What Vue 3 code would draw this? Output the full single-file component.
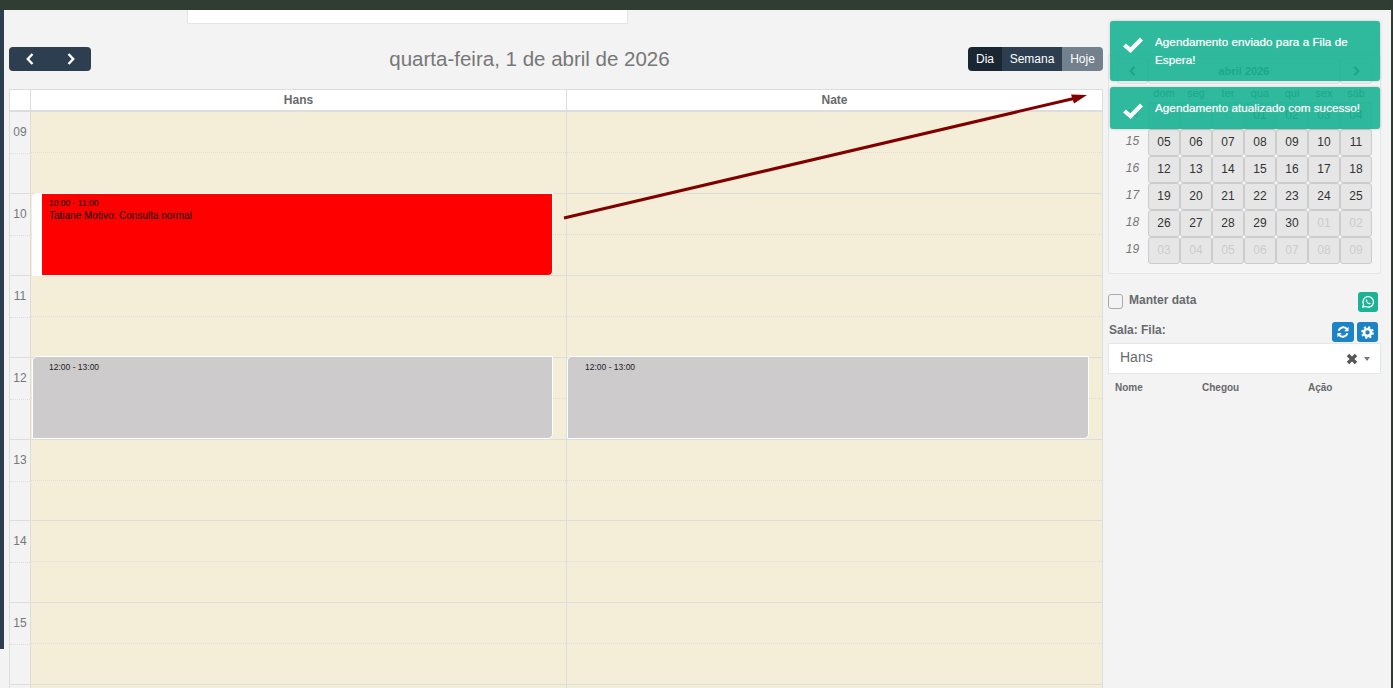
<template>
  <div class="pagina">
    <div class="topo"></div>

    <div class="corpo">
      <div class="faixa"></div>

      <main class="principal">
        <div class="caixa-topo"></div>

        <div class="barra">
          <div class="grupo-nav">
            <button class="btn-nav">
              <svg width="10" height="14" viewBox="0 0 10 14"><path d="M7.500 2 2.800 7l4.700 5" fill="none" stroke="#fff" stroke-width="2.400" /></svg>
            </button>
            <button class="btn-nav">
              <svg width="10" height="14" viewBox="0 0 10 14"><path d="M2.500 2 7.200 7l-4.700 5" fill="none" stroke="#fff" stroke-width="2.400" /></svg>
            </button>
          </div>
          <h2 class="titulo">quarta-feira, 1 de abril de 2026</h2>
          <div class="grupo-vista">
            <button class="btn-vista dia">Dia</button>
            <button class="btn-vista semana">Semana</button>
            <button class="btn-vista hoje">Hoje</button>
          </div>
        </div>

        <div class="agenda">
          <div class="agenda-cab">
            <div class="cab-hora"></div>
            <div v-for="p in profissionais" :key="p.nome" class="cab-nome">{{ p.nome }}</div>
          </div>
          <div class="agenda-corpo">
            <div class="coluna-horas">
              <div v-for="h in horas" :key="h" class="hora">
                <div class="meia rotulo">{{ h }}</div>
                <div class="meia"></div>
              </div>
            </div>
            <div v-for="p in profissionais" :key="p.nome" class="coluna">
              <div v-for="h in horas" :key="h" class="hora">
                <div class="meia"></div>
                <div class="meia"></div>
              </div>
              <div
                v-for="e in p.eventos"
                :key="e.hora"
                class="evento"
                :class="e.tipo"
                :style="{ top: e.topo + 'px', height: e.altura + 'px' }"
              >
                <div class="evento-hora">{{ e.hora }}</div>
                <div v-if="e.texto" class="evento-texto">{{ e.texto }}</div>
              </div>
            </div>
          </div>
        </div>
      </main>

      <aside class="lateral">
        <div class="calendario">
          <div class="cal-cab">
            <span class="cal-seta">
              <svg width="9" height="12" viewBox="0 0 10 14"><path d="M7.500 2 2.800 7l4.700 5" fill="none" stroke="#333" stroke-width="2.600" /></svg>
            </span>
            <span class="cal-mes">abril 2026</span>
            <span class="cal-seta">
              <svg width="9" height="12" viewBox="0 0 10 14"><path d="M2.500 2 7.200 7l-4.700 5" fill="none" stroke="#333" stroke-width="2.600" /></svg>
            </span>
          </div>
          <div class="cal-grade">
            <div></div>
            <div v-for="d in diasSemana" :key="d" class="cal-dow">{{ d }}</div>
            <template v-for="s in semanas" :key="s.num">
              <div class="cal-num">{{ s.num }}</div>
              <div
                v-for="d in s.dias"
                :key="d.t"
                class="cal-dia"
                :class="{ fora: d.fora, atual: d.atual }"
              >{{ d.t }}</div>
            </template>
          </div>
        </div>

        <div class="linha-manter">
          <label class="manter"><span class="check"></span><span class="manter-texto">Manter data</span></label>
          <button class="btn-icone verde">
            <svg width="14" height="14" viewBox="0 0 24 24">
              <path d="M3 21l1.400-5A9 9 0 1 1 8 19.700z" fill="none" stroke="#fff" stroke-width="2.200" stroke-linejoin="round" />
              <path d="M9 7.500c-1.300 1-1.200 2.600 0 4.500 1.300 2 3 3.400 5 3.800 1.300.2 2.300-.5 2.500-1.800l-2.200-1.200-1 1c-1.200-.5-2.300-1.600-3-3l.9-1-1-2.300z" fill="#fff" />
            </svg>
          </button>
        </div>

        <div class="linha-sala">
          <span class="sala">Sala: Fila:</span>
          <div class="botoes-sala">
            <button class="btn-icone azul">
              <svg width="14" height="14" viewBox="0 0 24 24">
                <path d="M4.500 10a8 8 0 0 1 13.600-3.500L20 8.500" fill="none" stroke="#fff" stroke-width="3.400" />
                <path d="M21.500 3v7.500H14z" fill="#fff" />
                <path d="M19.500 14a8 8 0 0 1-13.600 3.500L4 15.500" fill="none" stroke="#fff" stroke-width="3.400" />
                <path d="M2.500 21v-7.500H10z" fill="#fff" />
              </svg>
            </button>
            <button class="btn-icone azul">
              <svg width="13" height="13" viewBox="0 0 24 24">
                <circle cx="12" cy="12" r="6.500" fill="none" stroke="#fff" stroke-width="5" />
                <circle cx="12" cy="12" r="10" fill="none" stroke="#fff" stroke-width="3.500" stroke-dasharray="3.900 3.950" />
              </svg>
            </button>
          </div>
        </div>

        <div class="seletor">
          <span class="seletor-valor">Hans</span>
          <svg class="seletor-x" width="12" height="12" viewBox="0 0 12 12"><path d="M2 2l8 8M10 2l-8 8" stroke="#555" stroke-width="3.400" /></svg>
          <span class="seletor-caret"></span>
        </div>

        <div class="fila-cab">
          <span>Nome</span>
          <span>Chegou</span>
          <span>Ação</span>
        </div>
      </aside>
    </div>

    <svg class="seta" width="1393" height="688" viewBox="0 0 1393 688">
      <line x1="564" y1="218" x2="1076" y2="98" stroke="#800000" stroke-width="3" />
      <polygon points="1087,95 1071,94.500 1074,103.500" fill="#800000" />
    </svg>

    <div class="avisos">
      <div v-for="a in avisos" :key="a" class="aviso">
        <svg class="aviso-check" width="20" height="16" viewBox="0 0 20 16"><path d="M1.500 8 7.500 13.200 18.500 2" fill="none" stroke="#fff" stroke-width="4.200" /></svg>
        {{ a }}
      </div>
    </div>
  </div>
</template>

<script setup>
// a ultima hora fica sem rotulo: o texto dela cairia fora da tela
const horas = ['09', '10', '11', '12', '13', '14', '15', '']

const alturaHora = 81.9
const topoDe = (h) => Math.round((h - 9) * alturaHora)

const profissionais = [
  {
    nome: 'Hans',
    eventos: [
      { hora: '10:00 - 11:00', texto: 'Tatiane Motivo: Consulta normal', tipo: 'vermelho', topo: topoDe(10) - 1, altura: 83 },
      { hora: '12:00 - 13:00', tipo: 'cinza', topo: topoDe(12) - 2, altura: 83 }
    ]
  },
  {
    nome: 'Nate',
    eventos: [{ hora: '12:00 - 13:00', tipo: 'cinza', topo: topoDe(12) - 2, altura: 83 }]
  }
]

const diasSemana = ['dom', 'seg', 'ter', 'qua', 'qui', 'sex', 'sáb']

function dia(t, fora = false, atual = false) {
  return { t, fora, atual }
}

function faixa(inicio, fim) {
  const lista = []
  for (let i = inicio; i <= fim; i++) lista.push(dia(String(i).padStart(2, '0')))
  return lista
}

function foraDoMes(inicio, fim) {
  return faixa(inicio, fim).map((d) => ({ ...d, fora: true }))
}

const semanas = [
  { num: 14, dias: [...foraDoMes(29, 31), dia('01', false, true), ...faixa(2, 4)] },
  { num: 15, dias: faixa(5, 11) },
  { num: 16, dias: faixa(12, 18) },
  { num: 17, dias: faixa(19, 25) },
  { num: 18, dias: [...faixa(26, 30), ...foraDoMes(1, 2)] },
  { num: 19, dias: foraDoMes(3, 9) }
]

const avisos = ['Agendamento enviado para a Fila de Espera!', 'Agendamento atualizado com sucesso!']
</script>

<style>
html,
body {
  margin: 0;
  background: #f3f3f3;
  overflow: hidden;
}
</style>

<style scoped>
.pagina {
  position: relative;
  width: 1393px;
  height: 688px;
  box-sizing: border-box;
  overflow: hidden;
  background: #f3f3f3;
  border-right: 2px solid #2f3a33;
  font-family: "Liberation Sans", Arial, sans-serif;
  color: #676a6c;
}

.topo {
  height: 10px;
  background: #2f3e30;
}

.corpo {
  display: flex;
  align-items: flex-start;
}

.faixa {
  width: 4px;
  height: 639px;
  background: #2c3e50;
  flex: none;
}

.principal {
  width: 1094px;
  margin-left: 5px;
  flex: none;
}

.caixa-topo {
  width: 441px;
  height: 14px;
  margin-left: 178px;
  box-sizing: border-box;
  background: #fff;
  border: 1px solid #e5e5e5;
  border-top: none;
}

.barra {
  display: flex;
  justify-content: space-between;
  align-items: center;
  height: 24px;
  margin-top: 23px;
}

.grupo-nav,
.grupo-vista {
  display: flex;
  border-radius: 4px;
  overflow: hidden;
}

button {
  border: none;
  padding: 0;
  font-family: inherit;
  cursor: pointer;
}

.btn-nav {
  display: flex;
  align-items: center;
  justify-content: center;
  width: 41px;
  height: 24px;
  background: #2c3e50;
}

.titulo {
  margin: 0;
  font-size: 20.5px;
  font-weight: 400;
  color: #777;
}

.btn-vista {
  height: 24px;
  font-size: 12px;
  color: #fff;
}

.dia {
  width: 34px;
  background: #1a2632;
}

.semana {
  width: 60px;
  background: #2c3e50;
}

.hoje {
  width: 41px;
  background: #73808d;
}

.agenda {
  margin-top: 18px;
  border: 1px solid #ddd;
  border-bottom: none;
  box-sizing: border-box;
}

.agenda-cab {
  display: grid;
  grid-template-columns: 21px 536px 1fr;
  height: 22px;
  background: #fff;
  border-bottom: 2px solid #ddd;
  box-sizing: border-box;
}

.cab-hora,
.cab-nome {
  border-right: 1px solid #ddd;
}

.cab-nome {
  font-size: 12px;
  font-weight: 700;
  line-height: 20px;
  text-align: center;
  color: #676a6c;
}

.cab-nome:last-child {
  border-right: none;
}

.agenda-corpo {
  display: grid;
  grid-template-columns: 21px 536px 1fr;
}

.coluna-horas {
  border-right: 1px solid #ddd;
}

.coluna {
  position: relative;
  background: #f4eed8;
  border-right: 1px solid #ddd;
}

.coluna:last-child {
  border-right: none;
}

.hora {
  display: flex;
  flex-direction: column;
  height: 81.9px;
  box-sizing: border-box;
  border-bottom: 1px solid #ddd;
}

.meia {
  flex: 1;
}

.meia:first-child {
  border-bottom: 1px dotted #ddd;
}

.rotulo {
  font-size: 12px;
  line-height: 41px;
  text-align: center;
  color: #777;
}

.evento {
  position: absolute;
  left: 1px;
  width: 521px;
  box-sizing: border-box;
  border: 1px solid #fff;
  border-radius: 5px 0 5px 0;
  padding-left: 16px;
  color: #000;
}

.coluna:last-child .evento {
  left: 0;
  width: 522px;
  padding-left: 17px;
}

.vermelho {
  background: #f00;
  border-left: 10px solid #fff;
  padding-left: 7px;
}

.cinza {
  background: #cdcbcc;
  color: #222;
}

.evento-hora {
  margin-top: 4px;
  font-size: 8.5px;
  line-height: 12px;
}

.vermelho .evento-hora {
  margin-top: 3px;
}

.evento-texto {
  font-size: 10px;
  line-height: 14px;
}

.lateral {
  width: 273px;
  margin-left: 5px;
  flex: none;
}

.calendario {
  height: 220px;
  margin-top: 44px;
  padding: 3px 8px 0;
  box-sizing: border-box;
  background: #f5f5f5;
  border: 1px solid #e5e5e5;
  border-radius: 3px;
}

.cal-cab {
  display: grid;
  grid-template-columns: 31px 1fr 32px;
  height: 26px;
}

.cal-seta,
.cal-mes {
  display: flex;
  align-items: center;
  justify-content: center;
  border: 1px solid #ddd;
  border-radius: 3px;
}

.cal-mes {
  font-size: 11px;
  font-weight: 700;
  color: #333;
}

.cal-grade {
  display: grid;
  grid-template-columns: 31px repeat(7, 32px);
  grid-auto-rows: 27px;
  grid-template-rows: 18px;
}

.cal-dow {
  font-size: 11px;
  line-height: 18px;
  text-align: center;
  color: #333;
}

.cal-num {
  font-size: 12px;
  font-style: italic;
  line-height: 24px;
  text-align: center;
  color: #777;
}

.cal-dia {
  font-size: 12px;
  line-height: 25px;
  text-align: center;
  color: #333;
  background: #e6e6e6;
  border: 1px solid #ccc;
  border-radius: 3px;
  box-sizing: border-box;
}

.fora {
  color: #ccc;
}

.atual {
  background: #d4d4d4;
}

.linha-manter {
  display: flex;
  justify-content: space-between;
  align-items: center;
  height: 20px;
  margin-top: 18px;
  padding-right: 3px;
}

.manter {
  display: flex;
  align-items: center;
  font-size: 12px;
  font-weight: 700;
  color: #676a6c;
}

.manter-texto {
  padding-bottom: 4px;
}

.check {
  width: 15px;
  height: 15px;
  margin: 0 6px 1px 0;
  box-sizing: border-box;
  background: #f3f3f3;
  border: 1px solid #aaa;
  border-radius: 3px;
}

.btn-icone {
  display: flex;
  align-items: center;
  justify-content: center;
  width: 20px;
  height: 20px;
  border-radius: 3px;
}

.verde {
  background: #1ab394;
}

.azul {
  width: 22px;
  background: #1c84c6;
}

.azul:last-child {
  width: 21px;
}

.linha-sala {
  display: flex;
  justify-content: space-between;
  align-items: center;
  height: 20px;
  margin-top: 10px;
  padding: 0 3px 0 1px;
}

.sala {
  padding-bottom: 4px;
  font-size: 12px;
  font-weight: 700;
  color: #676a6c;
}

.botoes-sala {
  display: flex;
  gap: 3px;
}

.seletor {
  display: flex;
  align-items: center;
  height: 31px;
  margin-top: 1px;
  padding: 0 10px 0 11px;
  box-sizing: border-box;
  background: #fff;
  border: 1px solid #e5e6e7;
}

.seletor-valor {
  flex: 1;
  padding-bottom: 4px;
  font-size: 14px;
  color: #676a6c;
}

.seletor-x {
  margin-right: 6px;
}

.seletor-caret {
  width: 0;
  height: 0;
  border-left: 3.5px solid transparent;
  border-right: 3.5px solid transparent;
  border-top: 4px solid #777;
}

.fila-cab {
  display: grid;
  grid-template-columns: 87px 106px 1fr;
  padding-left: 7px;
  margin-top: 7px;
  font-size: 10px;
  font-weight: 700;
  line-height: 13px;
  color: #676a6c;
}

.seta {
  position: absolute;
  top: 0;
  left: 0;
  pointer-events: none;
}

.avisos {
  position: absolute;
  top: 21px;
  left: 1110px;
  display: flex;
  flex-direction: column;
  gap: 6px;
  width: 270px;
}

.aviso {
  position: relative;
  padding: 12px 12px 12px 45px;
  font-size: 11.75px;
  line-height: 18px;
  color: #fff;
  background: #1ab394;
  opacity: 0.9;
  border-radius: 3px;
  box-shadow: 0 0 3px rgba(0, 0, 0, 0.2);
  text-shadow: 0 0 1px rgba(255, 255, 255, 0.6);
}

.aviso-check {
  position: absolute;
  left: 13px;
  top: 16px;
}
</style>
